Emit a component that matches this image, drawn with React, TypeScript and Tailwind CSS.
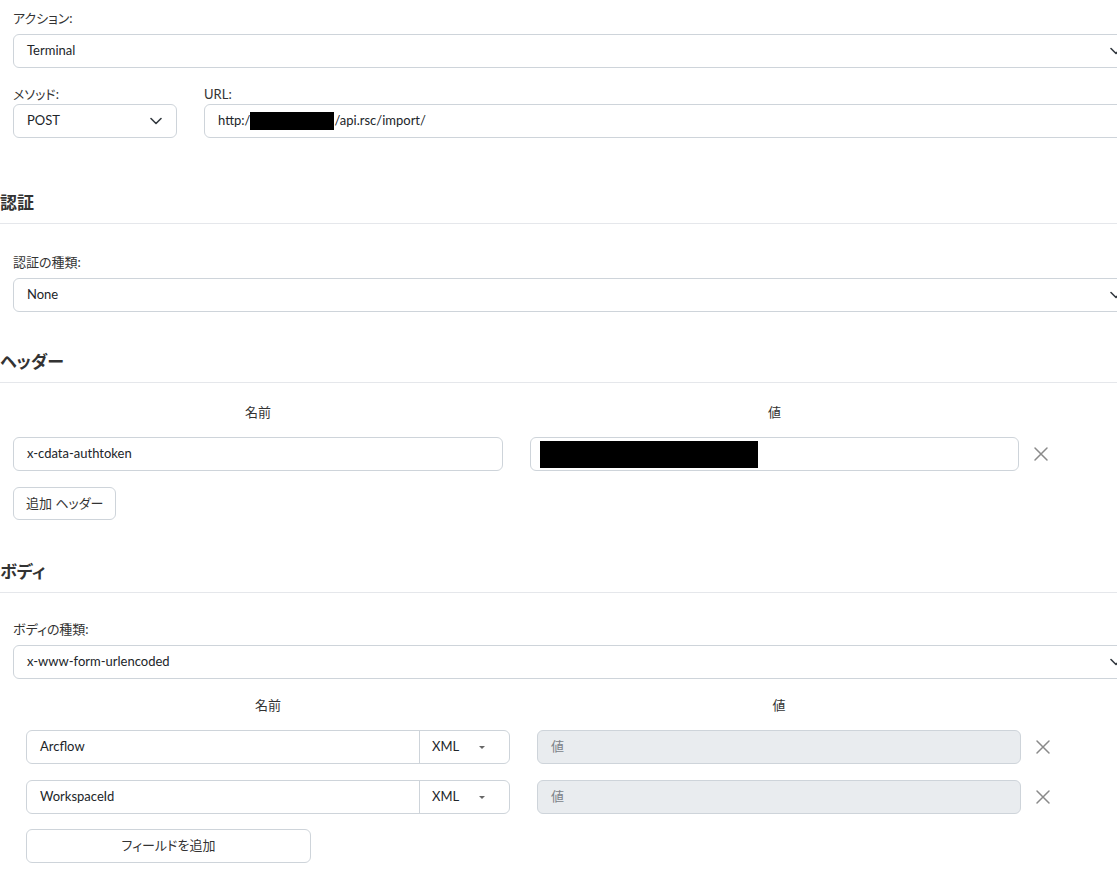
import React from 'react';

const font = { fontFamily: 'Lato, "Noto Sans CJK JP", sans-serif' };

function Chevron() {
  return (
    <svg width="12" height="8" viewBox="0 0 12 8">
      <path d="M1 1.5 L6 6.5 L11 1.5" fill="none" stroke="#343a40" strokeWidth="1.6" strokeLinecap="round" strokeLinejoin="round" />
    </svg>
  );
}

function CloseX() {
  return (
    <svg width="16" height="16" viewBox="0 0 16 16">
      <path d="M2 2 L14 14 M14 2 L2 14" stroke="#8a8a8a" strokeWidth="1.5" strokeLinecap="round" />
    </svg>
  );
}

function SelectBox({ value }: { value: string }) {
  return (
    <div className="flex h-[34px] items-center justify-between rounded-md border border-[#ced4da] bg-white pl-[13px] pr-[7px] text-[13px] text-[#212529]">
      <span>{value}</span>
      <Chevron />
    </div>
  );
}

function SectionTitle({ children }: { children: React.ReactNode }) {
  return (
    <div className="border-b border-[#e5e7eb] pb-[8px]">
      <h2 className="text-[17px] font-semibold leading-[24px] text-[#333]">{children}</h2>
    </div>
  );
}

function Label({ children }: { children: React.ReactNode }) {
  return <div className="mb-[7px] text-[13px] leading-[18px] text-[#333]">{children}</div>;
}

function BodyField({ name }: { name: string }) {
  return (
    <div className="flex items-center">
      <div className="flex h-[34px] w-[484px] rounded-md border border-[#ced4da] bg-white text-[13px] text-[#212529]">
        <div className="flex flex-1 items-center border-r border-[#ced4da] pl-[13px]">{name}</div>
        <div className="flex w-[89px] items-center pl-[12px]">
          <span>XML</span>
          {/* caret */}
          <span className="ml-[20px] inline-block h-0 w-0 border-x-[3px] border-t-[3px] border-x-transparent border-t-[#666]" />
        </div>
      </div>
      <div className="ml-[27px] flex h-[34px] w-[484px] items-center rounded-md border border-[#ced4da] bg-[#e9ecef] pl-[13px] text-[13px] text-[#7b8288]">
        値
      </div>
      <div className="ml-[14px] flex items-center">
        <CloseX />
      </div>
    </div>
  );
}

export default function App() {
  return (
    <div className="min-h-screen w-full overflow-hidden bg-white [font-feature-settings:'palt']" style={font}>
      <div className="w-[1130px] pb-[12px] pt-[9px]">
        {/* Request */}
        <div className="pl-[13px]">
          <Label>アクション:</Label>
          <SelectBox value="Terminal" />
          <div className="mt-[17px] flex gap-[27px]">
            <div className="w-[164px]">
              <div className="mb-[1px] text-[13px] leading-[18px] text-[#333]">メソッド:</div>
              <div className="flex h-[34px] items-center justify-between rounded-md border border-[#ced4da] bg-white pl-[13px] pr-[14px] text-[13px] text-[#212529]">
                <span>POST</span>
                <Chevron />
              </div>
            </div>
            <div className="flex-1">
              <div className="mb-[1px] text-[13px] leading-[18px] text-[#333]">URL:</div>
              <div className="flex h-[34px] items-center rounded-md border border-[#ced4da] bg-white pl-[13px] text-[13px] text-[#212529]">
                <span>http:/</span>
                <span className="inline-block h-[18px] w-[84px] bg-black" />
                <span>/api.rsc/import/</span>
              </div>
            </div>
          </div>
        </div>

        {/* Auth */}
        <div className="mt-[53px]">
          <SectionTitle>認証</SectionTitle>
          <div className="mt-[29px] pl-[13px]">
            <Label>認証の種類:</Label>
            <SelectBox value="None" />
          </div>
        </div>

        {/* Headers */}
        <div className="mt-[38px]">
          <SectionTitle>ヘッダー</SectionTitle>
          <div className="mt-[20px] pl-[13px]">
            <div className="flex text-[13px] leading-[18px] text-[#333]">
              <div className="w-[490px] text-center">名前</div>
              <div className="ml-[27px] w-[489px] text-center">値</div>
            </div>
            <div className="mt-[16px] flex items-center">
              <div className="flex h-[34px] w-[490px] items-center rounded-md border border-[#ced4da] bg-white pl-[13px] text-[13px] text-[#212529]">
                x-cdata-authtoken
              </div>
              <div className="ml-[27px] flex h-[34px] w-[489px] items-center rounded-md border border-[#ced4da] bg-white pl-[9px]">
                <span className="inline-block h-[27px] w-[218px] bg-black" />
              </div>
              <div className="ml-[14px] flex items-center">
                <CloseX />
              </div>
            </div>
            <button className="mt-[16px] h-[33px] rounded-md border border-[#ced4da] bg-white px-[12px] text-[13px] text-[#333]">
              追加 ヘッダー
            </button>
          </div>
        </div>

        {/* Body */}
        <div className="mt-[40px]">
          <SectionTitle>ボディ</SectionTitle>
          <div className="mt-[27px] pl-[13px]">
            <Label>ボディの種類:</Label>
            <SelectBox value="x-www-form-urlencoded" />
            <div className="pl-[13px]">
              <div className="mt-[17px] flex text-[13px] leading-[18px] text-[#333]">
                <div className="w-[484px] text-center">名前</div>
                <div className="ml-[27px] w-[484px] text-center">値</div>
              </div>
              <div className="mt-[16px] flex flex-col gap-[16px]">
                <BodyField name="Arcflow" />
                <BodyField name="WorkspaceId" />
              </div>
              <button className="mt-[15px] h-[34px] w-[285px] rounded-md border border-[#ced4da] bg-white text-[13px] text-[#333]">
                フィールドを追加
              </button>
            </div>
          </div>
        </div>
      </div>
    </div>
  );
}
